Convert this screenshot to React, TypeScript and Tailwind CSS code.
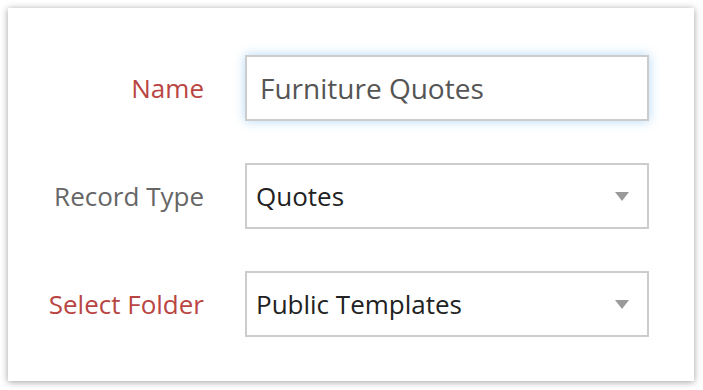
const FONT = { fontFamily: '"Open Sans", "Noto Sans", sans-serif' }

function Caret() {
  return (
    <svg width="14" height="9" viewBox="0 0 14 9" aria-hidden="true">
      <path d="M0 0h14L7 9z" fill="#9a9a9a" />
    </svg>
  )
}

function Label({ text, required }: { text: string; required?: boolean }) {
  return (
    <div
      className={`w-[196px] text-right text-[26px] ${required ? 'text-[#b94543]' : 'text-[#666666]'}`}
    >
      {text}
    </div>
  )
}

function Select({ value }: { value: string }) {
  return (
    <div className="flex h-[66px] w-[404px] items-center justify-between border-2 border-[#cccccc] bg-white pl-[9px] pr-[18px]">
      <span className="text-[26px] text-[#222222]">{value}</span>
      <Caret />
    </div>
  )
}

export default function App() {
  return (
    <div className="h-[390px] w-[703px] bg-white pl-[8px] pt-[8px]" style={FONT}>
      <div className="flex h-[373px] w-[686px] flex-col gap-[42px] bg-white pt-[47px] shadow-[0_1px_7px_rgba(0,0,0,0.38)]">
        <div className="flex items-center gap-[41px]">
          <Label text="Name" required />
          <div className="flex h-[66px] w-[404px] items-center border-2 border-[#cccccc] bg-white pl-[13px] shadow-[0_0_10px_rgba(82,168,236,0.45)]">
            <span className="text-[28px] text-[#555555]">Furniture Quotes</span>
          </div>
        </div>
        <div className="flex items-center gap-[41px]">
          <Label text="Record Type" />
          <Select value="Quotes" />
        </div>
        <div className="flex items-center gap-[41px]">
          <Label text="Select Folder" required />
          <Select value="Public Templates" />
        </div>
      </div>
    </div>
  )
}
